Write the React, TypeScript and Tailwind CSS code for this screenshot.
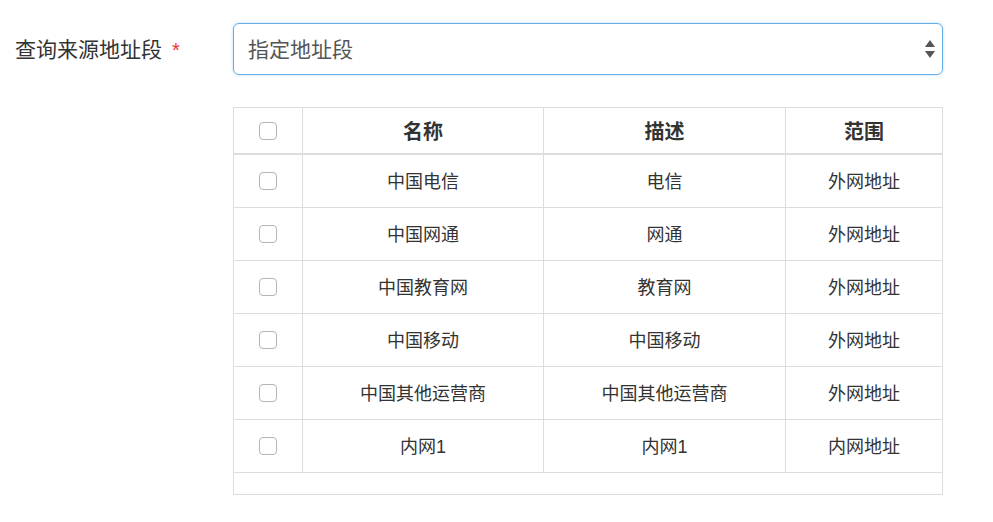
import React from "react";

const rows = [
  ["中国电信", "电信", "外网地址"],
  ["中国网通", "网通", "外网地址"],
  ["中国教育网", "教育网", "外网地址"],
  ["中国移动", "中国移动", "外网地址"],
  ["中国其他运营商", "中国其他运营商", "外网地址"],
  ["内网1", "内网1", "内网地址"],
];

function Box() {
  return <span className="block w-[18px] h-[18px] rounded-[4px] border border-[#b5b5b5] bg-white" />;
}

export default function App() {
  const font = { fontFamily: '"Liberation Sans", "Noto Sans CJK SC", sans-serif' };
  return (
    <div className="w-[993px] h-[522px] bg-white text-[#333] overflow-hidden" style={font}>
      <div className="flex pt-[23px]">
        <div className="w-[233px] pl-[15px] h-[52px] pt-[2px] flex items-center text-[21px]">
          <span>查询来源地址段</span>
          <span className="text-[#e33] ml-[10px] text-[20px]">*</span>
        </div>
        <div className="w-[710px]">
          <div className="h-[52px] rounded-[6px] border border-[#66afe9] shadow-[0_0_3px_rgba(102,175,233,0.5)] flex items-center justify-between pl-[14px] pr-[6px] pt-[2px] text-[21px] text-[#555]">
            <span>指定地址段</span>
            <svg width="12" height="20" viewBox="0 0 12 20" className="fill-[#555] -mt-[2px]">
              <path d="M6 1 L11 8 L1 8 Z" />
              <path d="M1 12 L11 12 L6 19 Z" />
            </svg>
          </div>
          <div className="mt-[32px] border border-[#ddd]">
            <div className="grid grid-cols-[68px_241px_242px_1fr] h-[47px] border-b-2 border-[#ddd] text-[20px] font-bold">
              <div className="flex items-center justify-center"><Box /></div>
              <div className="flex items-center justify-center pt-[2px] border-l border-[#ddd]">名称</div>
              <div className="flex items-center justify-center pt-[2px] border-l border-[#ddd]">描述</div>
              <div className="flex items-center justify-center pt-[2px] border-l border-[#ddd]">范围</div>
            </div>
            {rows.map((r, i) => (
              <div key={i} className="grid grid-cols-[68px_241px_242px_1fr] h-[53px] border-b border-[#ddd] text-[18px]">
                <div className="flex items-center justify-center"><Box /></div>
                <div className="flex items-center justify-center pt-[2px] border-l border-[#ddd]">{r[0]}</div>
                <div className="flex items-center justify-center pt-[2px] border-l border-[#ddd]">{r[1]}</div>
                <div className="flex items-center justify-center pt-[2px] border-l border-[#ddd]">{r[2]}</div>
              </div>
            ))}
            <div className="h-[21px]" />
          </div>
        </div>
      </div>
    </div>
  );
}
